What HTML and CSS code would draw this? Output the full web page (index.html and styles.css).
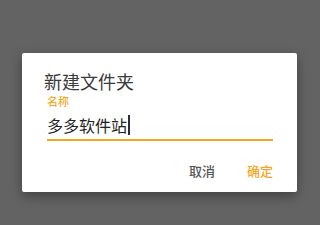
FILE: index.html
```html
<html>
<head>
	<title>新建文件夹</title>
<link rel="stylesheet" href="styles.css">
</head>
<body>

<div class="dialog">
	<h2 class="title">新建文件夹</h2>
	<div class="field">
		<div class="label">名称</div>
		<div class="value">多多软件站<span class="caret"></span></div>
	</div>
	<div class="actions">
		<span class="btn">取消</span>
		<span class="btn ok">确定</span>
	</div>
</div>

</body>
</html>
```

FILE: styles.css
```css
body{
	margin: 0;
	padding: 53px 0 0 22px;
	background-color: #636363;
	font-family: "Noto Sans CJK SC", "Noto Sans", sans-serif;
}

/* the dialog card */
.dialog{
	width: 275px;
	height: 139px;
	box-sizing: border-box;
	padding: 19px 24px 0 22px;
	background-color: #fff;
	border-radius: 2px;
	box-shadow: 0 4px 12px rgba(0,0,0,0.35);
}

.title{
	margin: 0;
	font-size: 18px;
	line-height: 18px;
	font-weight: normal;
	color: #3a3a3a;
}

.field{
	margin: 6px 0 0 3px;
}

.label{
	font-size: 11px;
	line-height: 11px;
	font-weight: 500;
	color: #f2ac2c;
}

.value{
	font-size: 16px;
	line-height: 16px;
	padding: 8px 0 4px 0;
	color: #222;
	border-bottom: 2px solid #f5a623;
	display: flex;
	align-items: center;
}

.caret{
	display: inline-block;
	width: 1.5px;
	height: 20px;
	margin-left: 1px;
	background-color: #2b2b3a;
}

.actions{
	display: flex;
	justify-content: flex-end;
	gap: 32px;
	margin: 23px 0 0 0;
}

.btn{
	font-size: 13px;
	line-height: 13px;
	font-weight: 500;
	color: #555;
}

.btn.ok{
	color: #f2a62a;
}
```
